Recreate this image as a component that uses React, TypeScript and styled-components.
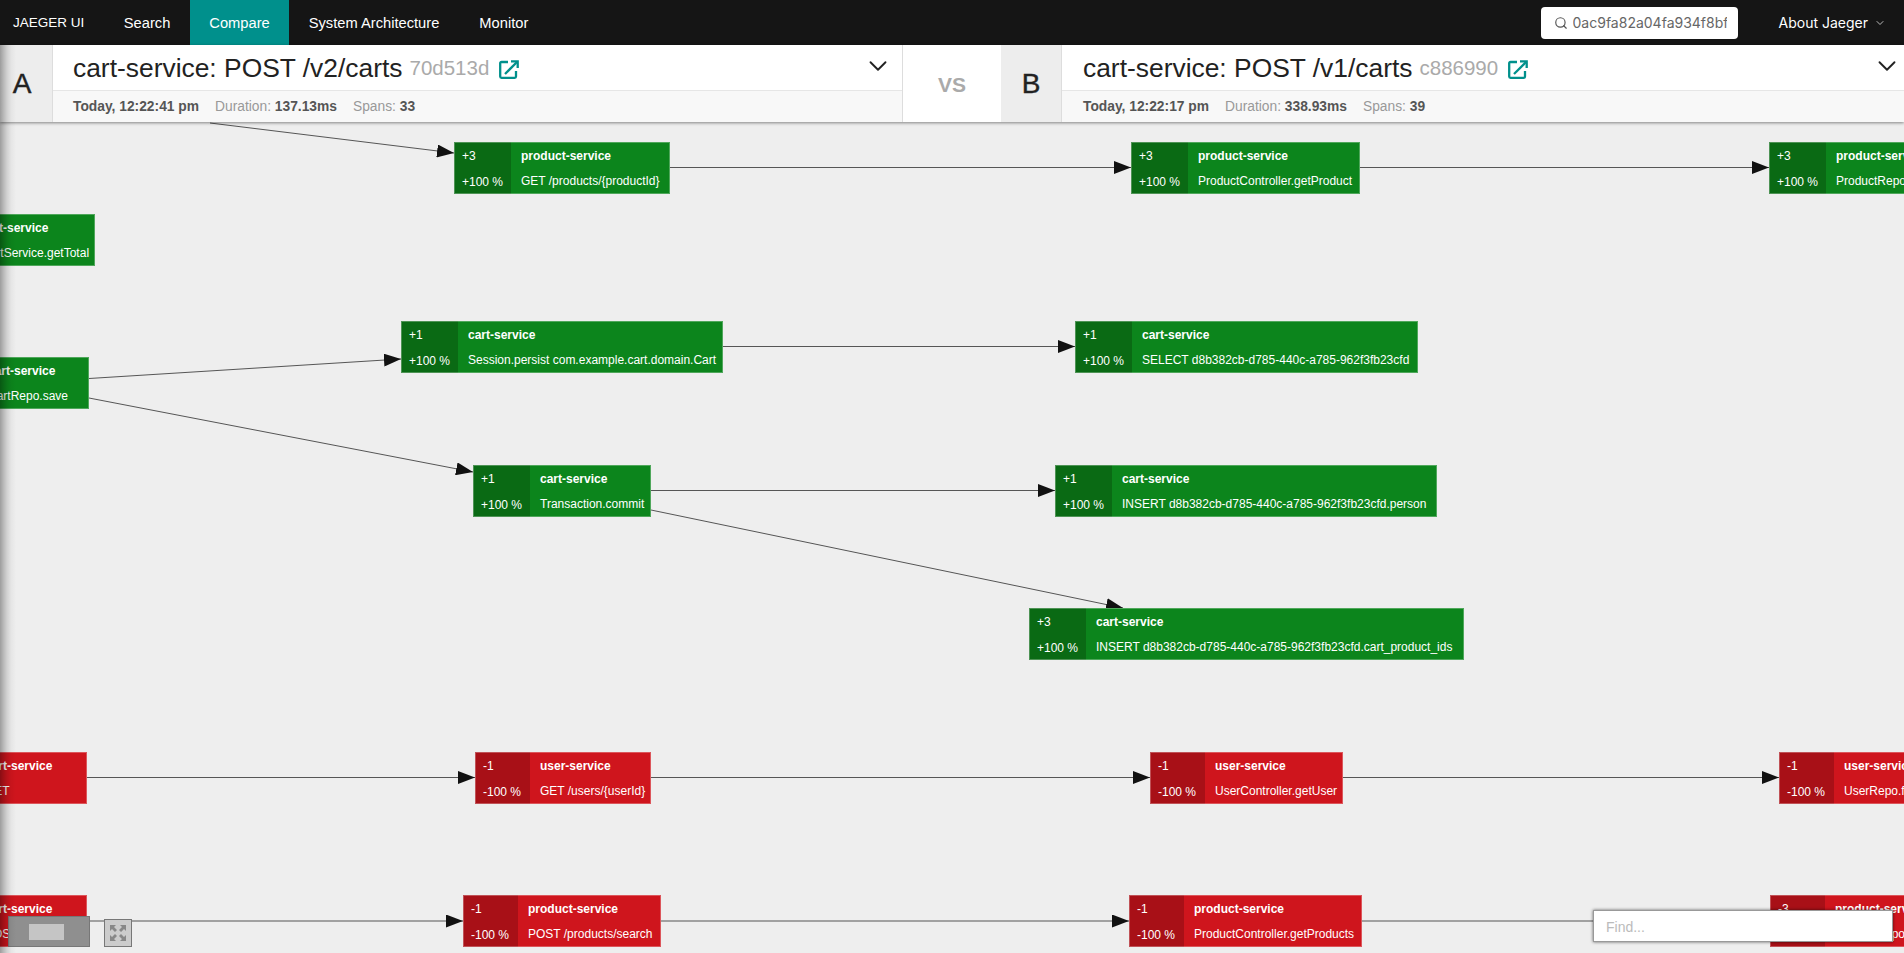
import styled, { createGlobalStyle } from "styled-components";
import { ChevronDown, Search as SearchIcon } from "lucide-react";

const GlobalStyle = createGlobalStyle`
  html, body {
    margin: 0;
    height: 100%;
    overflow: hidden;
    background: #eee;
    font-family: "Liberation Sans", Arial, sans-serif;
  }
`;

const Page = styled.div`
  position: relative;
  width: 1904px;
  height: 953px;
  overflow: hidden;
  display: flex;
  flex-direction: column;
`;

const TopNav = styled.nav`
  height: 45px;
  flex: none;
  display: flex;
  align-items: stretch;
  background: #151515;
  color: #fff;
  font-size: 14.7px;
`;

const Brand = styled.div`
  padding: 0 19.5px 0 13px;
  display: flex;
  align-items: center;
  font-size: 13.5px;
`;

const NavItem = styled.div<{ $active?: boolean }>`
  padding: 0 ${(props) => (props.$active ? "19px" : "20px")};
  display: flex;
  align-items: center;
  background: ${(props) => (props.$active ? "#00908c" : "transparent")};
`;

const NavRight = styled.div`
  margin-left: auto;
  display: flex;
  align-items: center;
  font-family: Inter, sans-serif;
  font-size: 14px;
  padding-right: 18px;
`;

const SearchBox = styled.div`
  width: 197px;
  height: 32px;
  box-sizing: border-box;
  margin-right: 41px;
  background: #fff;
  border-radius: 4px;
  display: flex;
  align-items: center;
  padding: 0 11px 0 13px;
  gap: 5px;
  color: #666;
  font-size: 14px;
  svg {
    flex: none;
    color: #555;
  }
`;

const SearchText = styled.div`
  overflow: hidden;
  white-space: nowrap;
`;

const AboutMenu = styled.div`
  display: flex;
  align-items: center;
  gap: 6px;
  svg {
    opacity: 0.7;
  }
`;

const CompareHeader = styled.header`
  position: relative;
  z-index: 2;
  height: 77px;
  flex: none;
  display: flex;
  background: #fff;
  box-shadow: 0 1px 3px rgba(0, 0, 0, 0.45);
`;

const Letter = styled.div<{ $first?: boolean }>`
  width: ${(props) => (props.$first ? "53px" : "61px")};
  padding-right: ${(props) => (props.$first ? "8px" : "0")};
  box-sizing: border-box;
  flex: none;
  display: flex;
  align-items: center;
  justify-content: center;
  background: #ededed;
  border-right: 1px solid #ddd;
  color: #222;
  font-size: 28px;
  -webkit-text-stroke: 0.4px #222;
`;

const TracePanel = styled.div<{ $wide?: boolean }>`
  flex: ${(props) => (props.$wide ? "1" : "none")};
  width: ${(props) => (props.$wide ? "auto" : "849px")};
  display: flex;
  flex-direction: column;
  min-width: 0;
`;

const TitleRow = styled.div<{ $wide?: boolean }>`
  height: 46px;
  box-sizing: border-box;
  display: flex;
  align-items: center;
  padding: 1px ${(props) => (props.$wide ? "2px" : "9px")} 0
    ${(props) => (props.$wide ? "21px" : "20px")};
  border-bottom: 1px solid #e6e6e6;
  color: #222;
  font-size: 26.4px;
  white-space: nowrap;
`;

const TraceHash = styled.span`
  margin-left: 7px;
  font-size: 20.5px;
  color: #aaa;
`;

const TraceLink = styled.svg`
  margin: 3px 0 0 10px;
  flex: none;
`;

const Caret = styled(ChevronDown)`
  margin-left: auto;
  position: relative;
  top: -2px;
`;

const MetaRow = styled.div<{ $wide?: boolean }>`
  flex: 1;
  background: #f8f8f8;
  display: flex;
  align-items: center;
  gap: 16px;
  padding-left: ${(props) => (props.$wide ? "21px" : "20px")};
  font-size: 13.8px;
  color: #999;
  white-space: nowrap;
  b {
    color: #555;
  }
`;

const Versus = styled.div`
  width: 99px;
  flex: none;
  box-sizing: border-box;
  display: flex;
  align-items: center;
  justify-content: center;
  padding-top: 2px;
  border-left: 1px solid #ddd;
  color: #aaa;
  font-size: 21px;
  font-weight: 700;
`;

const GraphCanvas = styled.main`
  position: relative;
  flex: 1;
  background: #eee;
`;

const EdgeLayer = styled.svg`
  position: absolute;
  left: 0;
  top: -45px;
  pointer-events: none;
`;

const Node = styled.div<{ $removed?: boolean }>`
  position: absolute;
  height: 52px;
  box-sizing: border-box;
  display: grid;
  grid-template-rows: 1fr 1fr;
  grid-template-columns: ${(props) => (props.$removed ? "55px" : "57px")} 1fr;
  color: #fff;
  font-size: 12px;
  white-space: nowrap;
  overflow: hidden;
  background: ${(props) => (props.$removed ? "#cf151d" : "#0c851c")};
  outline: 1px solid rgba(255, 255, 255, 0.28);
  outline-offset: -1px;
  --dark: ${(props) => (props.$removed ? "#a81017" : "#0a6a14")};
`;

const NodeCount = styled.div`
  background: var(--dark);
  padding: 1px 0 0 8px;
  display: flex;
  align-items: center;
`;

const NodeName = styled.div`
  padding: 1px 0 0 10px;
  display: flex;
  align-items: center;
  font-weight: 700;
`;

const NodeOperation = styled.div`
  padding-left: 10px;
  display: flex;
  align-items: center;
`;

const Minimap = styled.div`
  position: absolute;
  left: 8px;
  bottom: 6px;
  width: 82px;
  height: 31px;
  box-sizing: border-box;
  background: #8f8f8f;
  border: 1px solid #777;
  display: flex;
  align-items: center;
  padding-left: 20px;
  z-index: 3;
`;

const MinimapWindow = styled.div`
  width: 35px;
  height: 16px;
  background: #c5c5c5;
`;

const ResetButton = styled.div`
  position: absolute;
  left: 104px;
  bottom: 6px;
  width: 28px;
  height: 28px;
  box-sizing: border-box;
  background: #ccc;
  border: 1px solid #777;
  display: flex;
  align-items: center;
  justify-content: center;
  z-index: 3;
`;

const FindBox = styled.div`
  position: absolute;
  left: 1593px;
  bottom: 11px;
  width: 300px;
  height: 32px;
  box-sizing: border-box;
  background: #fff;
  border: 1px solid #999;
  box-shadow: 0 0 3px rgba(0, 0, 0, 0.6);
  display: flex;
  align-items: center;
  padding: 2px 0 0 12px;
  color: #bbb;
  font-size: 14px;
  z-index: 3;
`;

const EdgeShadow = styled.div`
  position: absolute;
  left: 0;
  top: 45px;
  bottom: 0;
  width: 16px;
  z-index: 4;
  pointer-events: none;
  background: linear-gradient(
    to right,
    rgba(0, 0, 0, 0.34) 0,
    rgba(0, 0, 0, 0.24) 3px,
    rgba(0, 0, 0, 0.12) 7px,
    rgba(0, 0, 0, 0.04) 11px,
    rgba(0, 0, 0, 0) 16px
  );
`;

type NodeData = {
  x: number;
  y: number;
  w: number;
  left: string;
  pct: string;
  service: string;
  op: string;
  removed?: boolean;
};

const nodes: NodeData[] = [
  { x: 454, y: 142, w: 216, left: "+3", pct: "+100 %", service: "product-service", op: "GET /products/{productId}" },
  { x: 1131, y: 142, w: 229, left: "+3", pct: "+100 %", service: "product-service", op: "ProductController.getProduct" },
  { x: 1769, y: 142, w: 230, left: "+3", pct: "+100 %", service: "product-service", op: "ProductRepo.findById" },
  { x: -86, y: 214, w: 181, left: "+3", pct: "+100 %", service: "cart-service", op: "CartService.getTotal" },
  { x: -79, y: 357, w: 168, left: "+1", pct: "+100 %", service: "cart-service", op: "CartRepo.save" },
  { x: 401, y: 321, w: 322, left: "+1", pct: "+100 %", service: "cart-service", op: "Session.persist com.example.cart.domain.Cart" },
  { x: 1075, y: 321, w: 343, left: "+1", pct: "+100 %", service: "cart-service", op: "SELECT d8b382cb-d785-440c-a785-962f3fb23cfd" },
  { x: 473, y: 465, w: 178, left: "+1", pct: "+100 %", service: "cart-service", op: "Transaction.commit" },
  { x: 1055, y: 465, w: 382, left: "+1", pct: "+100 %", service: "cart-service", op: "INSERT d8b382cb-d785-440c-a785-962f3fb23cfd.person" },
  { x: 1029, y: 608, w: 435, left: "+3", pct: "+100 %", service: "cart-service", op: "INSERT d8b382cb-d785-440c-a785-962f3fb23cfd.cart_product_ids" },
  { x: -80, y: 752, w: 167, left: "-1", pct: "-100 %", service: "cart-service", op: "GET", removed: true },
  { x: 475, y: 752, w: 176, left: "-1", pct: "-100 %", service: "user-service", op: "GET /users/{userId}", removed: true },
  { x: 1150, y: 752, w: 193, left: "-1", pct: "-100 %", service: "user-service", op: "UserController.getUser", removed: true },
  { x: 1779, y: 752, w: 200, left: "-1", pct: "-100 %", service: "user-service", op: "UserRepo.findById", removed: true },
  { x: -80, y: 895, w: 167, left: "-1", pct: "-100 %", service: "cart-service", op: "POST", removed: true },
  { x: 463, y: 895, w: 198, left: "-1", pct: "-100 %", service: "product-service", op: "POST /products/search", removed: true },
  { x: 1129, y: 895, w: 233, left: "-1", pct: "-100 %", service: "product-service", op: "ProductController.getProducts", removed: true },
  { x: 1770, y: 895, w: 230, left: "-3", pct: "-100 %", service: "product-service", op: "ProductRepo.search", removed: true },
];

const edges: number[][] = [
  [210, 123, 454, 153],
  [670, 167.5, 1131, 167.5],
  [1360, 167.5, 1769, 167.5],
  [89, 378.5, 401, 359],
  [89, 398, 473, 472],
  [723, 346.5, 1075, 346.5],
  [651, 490.5, 1055, 490.5],
  [651, 510, 1123, 608],
  [87, 777.5, 475, 777.5],
  [651, 777.5, 1150, 777.5],
  [1343, 777.5, 1779, 777.5],
  [87, 921, 463, 921],
  [661, 921, 1129, 921],
  [1362, 921, 1770, 921],
];

function LinkIcon() {
  return (
    <TraceLink width="20" height="20" viewBox="0 0 20 20" fill="none" stroke="#00908c" strokeWidth="2.3">
      <path d="M9 2H2.5a1.3 1.3 0 0 0-1.3 1.3v13.2a1.3 1.3 0 0 0 1.3 1.3h13.2a1.3 1.3 0 0 0 1.3-1.3V11" />
      <path d="M6 14L18 2" />
      <path d="M12 1.3h6.7V8" />
    </TraceLink>
  );
}

export default function App() {
  return (
    <Page>
      <GlobalStyle />
      <TopNav>
        <Brand>JAEGER UI</Brand>
        <NavItem>Search</NavItem>
        <NavItem $active>Compare</NavItem>
        <NavItem>System Architecture</NavItem>
        <NavItem>Monitor</NavItem>
        <NavRight>
          <SearchBox>
            <SearchIcon size={14} />
            <SearchText>0ac9fa82a04fa934f8bf6c2d1e</SearchText>
          </SearchBox>
          <AboutMenu>
            About Jaeger
            <ChevronDown size={12} />
          </AboutMenu>
        </NavRight>
      </TopNav>

      <CompareHeader>
        <Letter $first>A</Letter>
        <TracePanel>
          <TitleRow>
            cart-service: POST /v2/carts
            <TraceHash>70d513d</TraceHash>
            <LinkIcon />
            <Caret size={30} strokeWidth={1.5} color="#222" />
          </TitleRow>
          <MetaRow>
            <b>Today, 12:22:41 pm</b>
            <span>
              Duration: <b>137.13ms</b>
            </span>
            <span>
              Spans: <b>33</b>
            </span>
          </MetaRow>
        </TracePanel>
        <Versus>VS</Versus>
        <Letter>B</Letter>
        <TracePanel $wide>
          <TitleRow $wide>
            cart-service: POST /v1/carts
            <TraceHash>c886990</TraceHash>
            <LinkIcon />
            <Caret size={30} strokeWidth={1.5} color="#222" />
          </TitleRow>
          <MetaRow $wide>
            <b>Today, 12:22:17 pm</b>
            <span>
              Duration: <b>338.93ms</b>
            </span>
            <span>
              Spans: <b>39</b>
            </span>
          </MetaRow>
        </TracePanel>
      </CompareHeader>

      <GraphCanvas>
        <EdgeLayer width="1904" height="953">
          <defs>
            <marker id="arrow" markerUnits="userSpaceOnUse" markerWidth="18" markerHeight="13" refX="17" refY="6.5" orient="auto">
              <path d="M0 0L17 6.5L0 13Z" fill="#111" />
            </marker>
          </defs>
          {edges.map(([x1, y1, x2, y2]) => (
            <line key={`${x1}-${y1}-${x2}`} x1={x1} y1={y1 - 77} x2={x2} y2={y2 - 77} stroke="#555" strokeWidth="1" markerEnd="url(#arrow)" />
          ))}
        </EdgeLayer>
        {nodes.map((n) => (
          <Node key={`${n.x}-${n.y}`} $removed={n.removed} style={{ left: n.x, top: n.y - 122, width: n.w }}>
            <NodeCount>{n.left}</NodeCount>
            <NodeName>{n.service}</NodeName>
            <NodeCount>{n.pct}</NodeCount>
            <NodeOperation>{n.op}</NodeOperation>
          </Node>
        ))}
        <Minimap>
          <MinimapWindow />
        </Minimap>
        <ResetButton>
          <svg width="18" height="18" viewBox="0 0 18 18" fill="#888">
            <path d="M1 1h6L5 3l3 3-2 2-3-3-2 2zM17 1v6l-2-2-3 3-2-2 3-3-2-2zM1 17v-6l2 2 3-3 2 2-3 3 2 2zM17 17h-6l2-2-3-3 2-2 3 3 2-2z" />
          </svg>
        </ResetButton>
        <FindBox>Find...</FindBox>
      </GraphCanvas>
      <EdgeShadow />
    </Page>
  );
}
